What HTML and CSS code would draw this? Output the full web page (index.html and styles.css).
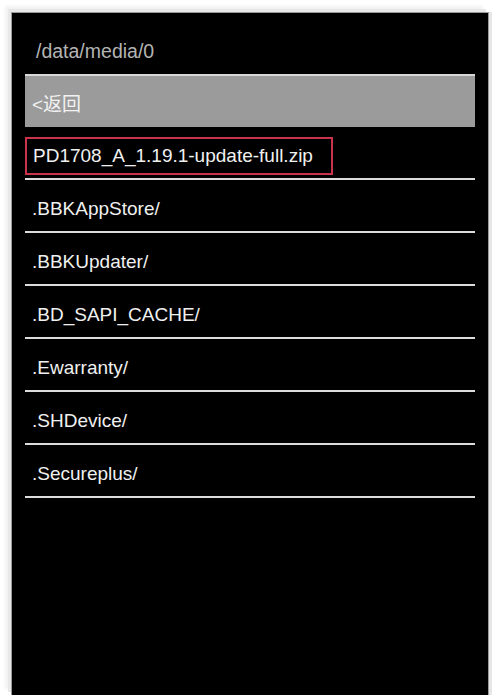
FILE: index.html
```html
<!DOCTYPE html>
<html>
<head>
<meta charset="utf-8">
<link rel="stylesheet" href="styles.css">
</head>
<body>
<div class="frame">
  <div class="screen">
    <div class="path">/data/media/0</div>
    <div class="back">&lt;返回</div>
    <ul class="list">
      <li class="row"><span class="hl">PD1708_A_1.19.1-update-full.zip</span></li>
      <li class="row">.BBKAppStore/</li>
      <li class="row">.BBKUpdater/</li>
      <li class="row">.BD_SAPI_CACHE/</li>
      <li class="row">.Ewarranty/</li>
      <li class="row">.SHDevice/</li>
      <li class="row">.Secureplus/</li>
    </ul>
  </div>
</div>
</body>
</html>
```

FILE: styles.css
```css
html, body {
  margin: 0;
  padding: 0;
  background: #fff;
  height: 100%;
  overflow: hidden;
}
.frame {
  padding: 12px 11px 0 11px;
  height: 100%;
  box-sizing: border-box;
}
.screen {
  background: #000;
  height: 100%;
  box-sizing: border-box;
  padding: 0 13px;
  border: 1px solid #9a9a9a;
  border-bottom: none;
  box-shadow: -3px -3px 0 #e8e8e8, -6px -6px 3px #f2f2f2, 3px 0 0 #e6e6e6;
  font-family: "Liberation Sans", Arial, "Noto Sans CJK SC", sans-serif;
  font-size: 19px;
}
.path {
  height: 61px;
  box-sizing: border-box;
  padding: 28px 0 0 11px;
  color: #b4b4b4;
  font-size: 19.5px;
  line-height: 20px;
}
.back {
  height: 53px;
  box-sizing: border-box;
  background: #9b9b9b;
  border-top: 2px solid #d8d8d8;
  color: #f2f2f2;
  padding: 2px 0 0 7px;
  display: flex;
  align-items: center;
}
.list {
  list-style: none;
  margin: 0;
  padding: 0;
}
.row {
  height: 53px;
  box-sizing: border-box;
  border-bottom: 2px solid #dcdcdc;
  color: #f0f0f0;
  padding: 6px 0 0 7px;
  display: flex;
  align-items: center;
}
.row:first-child {
  align-items: flex-start;
  padding-left: 0;
  padding-top: 10px;
}
.hl {
  border: 2px solid #c8344c;
  padding: 7px 18px 7px 6px;
  line-height: 20px;
}
```
